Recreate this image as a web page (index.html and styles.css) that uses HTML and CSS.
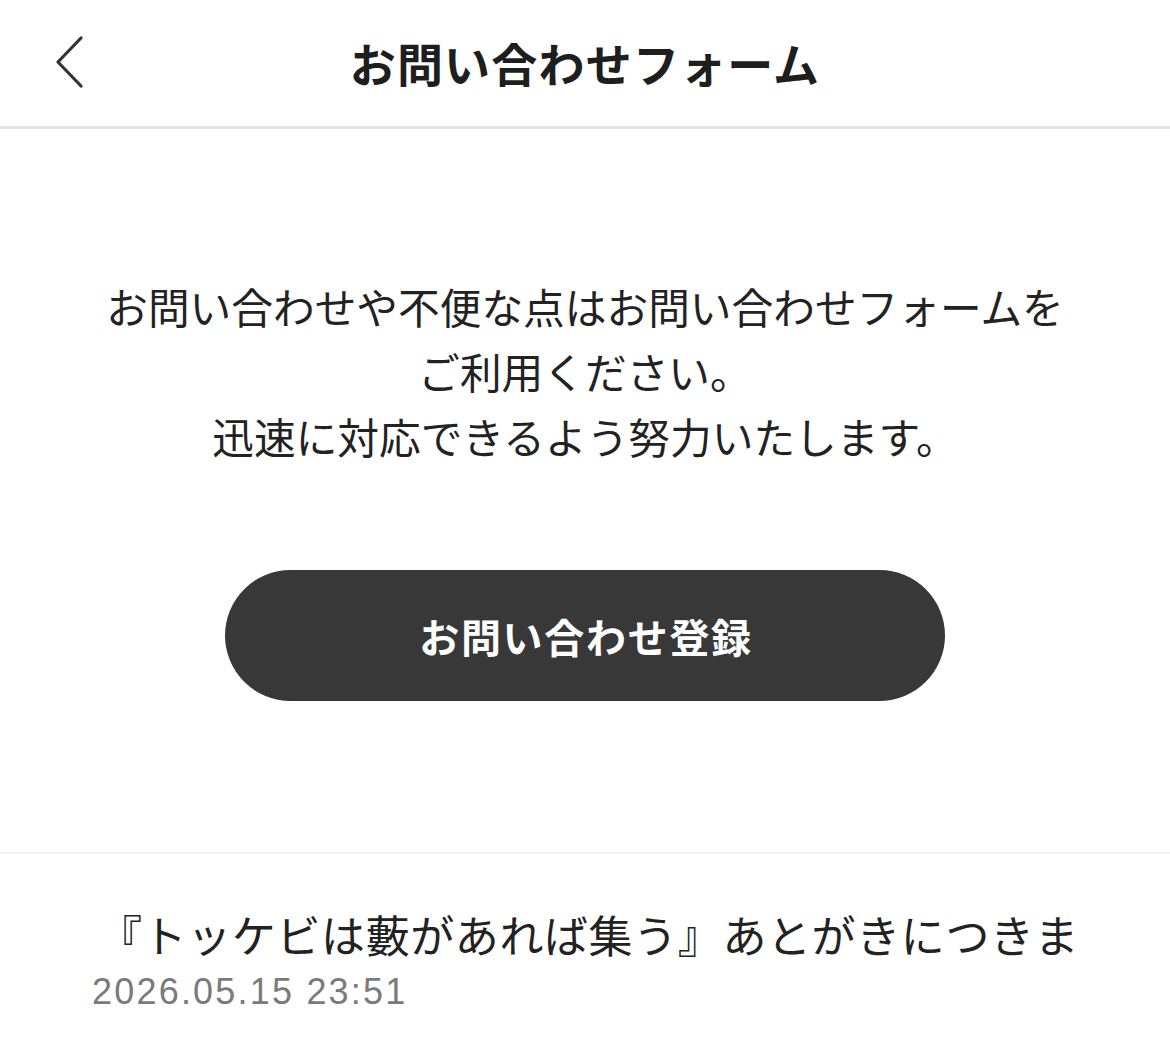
FILE: index.html
```html
<!DOCTYPE html>
<html lang="ja">
<head>
<meta charset="utf-8">
<title>お問い合わせフォーム</title>
<link rel="stylesheet" href="styles.css">
</head>
<body>
<header class="topbar">
  <button class="back" aria-label="戻る">
    <svg width="30" height="54" viewBox="0 0 30 54"><path d="M26 2 L3 26 L26 50" fill="none" stroke="#333" stroke-width="3.2" stroke-linecap="round" stroke-linejoin="round"/></svg>
  </button>
  <h1 class="title">お問い合わせフォーム</h1>
</header>
<main class="content">
  <p class="lead">お問い合わせや不便な点はお問い合わせフォームを<br>ご利用ください。<br>迅速に対応できるよう努力いたします。</p>
  <button class="cta">お問い合わせ登録</button>
</main>
<section class="notice">
  <div class="notice-title">『トッケビは藪があれば集う』あとがきにつきま</div>
  <div class="notice-date">2026.05.15 23:51</div>
</section>
</body>
</html>
```
FILE: styles.css
```css
* { box-sizing: border-box; }
html, body { margin: 0; padding: 0; background: #fff; }
body {
  font-family: "Noto Sans CJK JP", "Noto Sans", sans-serif;
  color: #222;
  width: 1170px;
  overflow: hidden;
}
.topbar {
  position: relative;
  height: 129px;
  border-bottom: 3px solid #e3e3e3;
  display: flex;
  align-items: center;
  justify-content: center;
}
.back {
  position: absolute;
  left: 55px;
  top: 36px;
  border: 0;
  background: none;
  padding: 0;
  width: 30px;
  height: 54px;
}
.back svg { display: block; }
.title {
  margin: 0;
  font-size: 46px;
  font-weight: 700;
  letter-spacing: 1.2px;
  line-height: 1;
  margin-top: -3px;
  color: #1e1e1e;
}
.content {
  display: flex;
  flex-direction: column;
  align-items: center;
  padding-top: 145px;
  padding-bottom: 151px;
  border-bottom: 2px solid #f1f1f1;
}
.lead {
  margin: 0;
  text-align: center;
  font-size: 41.7px;
  line-height: 65px;
  letter-spacing: 0;
  color: #222;
}
.cta {
  margin-top: 101px;
  width: 720px;
  height: 131px;
  border: 0;
  border-radius: 66px;
  background: #383838;
  color: #fff;
  font-family: "Noto Sans CJK JP", "Noto Sans", sans-serif;
  font-size: 40px;
  font-weight: 700;
  letter-spacing: 1.7px;
  padding: 0 0 0 2px;
}
.notice {
  padding: 50px 40px 0 92px;
}
.notice-title {
  font-size: 44px;
  line-height: 60px;
  letter-spacing: 0.6px;
  white-space: nowrap;
  color: #222;
  margin-left: 6px;
}
.notice-date {
  font-family: "Liberation Sans", Arial, sans-serif;
  font-size: 36px;
  line-height: 50px;
  letter-spacing: 2.2px;
  color: #7a7a7a;
  margin-top: 3px;
}
```
